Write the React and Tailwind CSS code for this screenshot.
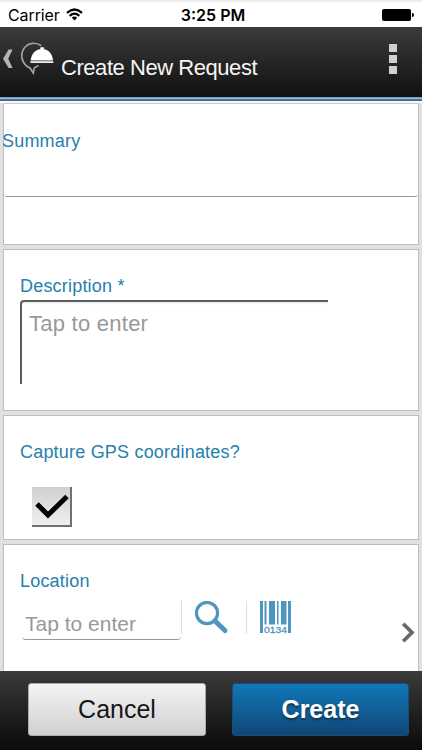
function StatusBar() {
  return (
    <div className="grid h-[27px] shrink-0 grid-cols-3 items-center border-t-2 border-[#ededed] bg-white px-2 font-['Inter',sans-serif] text-black">
      <div className="flex items-center gap-[6px]">
        <span className="text-[16px] leading-[20px] tracking-[-0.1px]">Carrier</span>
        <svg width="17" height="13" viewBox="0 0 17 13" fill="none" stroke="#000" strokeWidth="2.2">
          <path d="M1 4.8Q8.5 -1.8 16 4.8" />
          <path d="M3.7 7.8Q8.5 3.6 13.3 7.8" />
          <path d="M8.5 12.5L5.8 9.8Q8.5 7.4 11.2 9.8Z" fill="#000" stroke="none" />
        </svg>
      </div>
      <span className="pl-1 text-center text-[16px] leading-[20px] font-semibold whitespace-nowrap">3:25 PM</span>
      <div className="flex items-center justify-end gap-px">
        <div className="h-[12px] w-[29px] rounded-[2px] bg-black" />
        <div className="h-1 w-[2px] rounded-r bg-black" />
      </div>
    </div>
  );
}

function Header() {
  return (
    <header className="flex h-[70px] shrink-0 bg-linear-to-b from-[#3c3c3c] to-[#111111] text-white">
      <svg className="shrink-0" width="61" height="70" viewBox="0 0 61 70" fill="none">
        <path d="M8.6 22.5H12.6L8.2 31.8L12.6 41H8.6L3 31.8Z" fill="#b4b4b4" />
        <path d="M41.3 18.7C36 15 28.8 15.5 24.7 20.5C20 26.2 21.3 34 26 38.5C27.5 39.8 29 40.5 30 41L33.3 46L34.4 40.8L38.5 38.5" stroke="#a0a0a0" strokeWidth="1.7" />
        <path d="M30.7 33.4C31.2 26.5 36 22 42 22S52.5 26.5 53 33.4Z" fill="#fff" />
        <rect x="30.4" y="34.2" width="23" height="1.8" fill="#eee" />
        <rect x="40.2" y="20.2" width="4" height="2.4" rx="1" fill="#fff" />
      </svg>
      <h1 className="mt-[28px] grow text-[22px] leading-[25px] tracking-[-0.45px] text-[#f5f5f5]">Create New Request</h1>
      <div className="mt-[17px] mr-[25px] flex flex-col gap-[3px]">
        <i className="size-2 bg-[#d0d0d0]" />
        <i className="size-2 bg-[#d0d0d0]" />
        <i className="size-2 bg-[#d0d0d0]" />
      </div>
    </header>
  );
}

function Card({ className, children }) {
  return <section className={"shrink-0 border border-[#bdbdbd] bg-white " + className}>{children}</section>;
}

function Label({ children }) {
  return <div className="text-[18px] leading-[20px] tracking-[0.2px] text-[#2580ae]">{children}</div>;
}

export default function App() {
  return (
    <div className="flex h-[750px] w-[422px] flex-col overflow-hidden bg-[#e0e0e0] font-['Liberation_Sans',Arial,sans-serif]">
      <StatusBar />
      <Header />
      <div className="h-px shrink-0 bg-[#749cc4]" />
      <div className="h-px shrink-0 bg-[#9dc0df]" />
      <div className="h-[2px] shrink-0 bg-[#5068a0]" />
      <div className="h-[2px] shrink-0 bg-[#f3f5f7]" />
      <main className="flex grow flex-col gap-[4px] overflow-hidden px-[3px]">
        <Card className="h-[142px] border-t-[#c5d3c5]">
          <div className="h-[93px] rounded-b-[3px] border-b border-[#999] pt-[27px]">
            <div className="-ml-[2px]"><Label>Summary</Label></div>
          </div>
        </Card>
        <Card className="h-[162px] pt-[26px] pl-4">
          <Label>Description *</Label>
          <div className="mt-[4px] h-[84px] w-[308px] rounded-tl-[4px] border-t-2 border-l-2 border-[#5c5c5c] bg-linear-to-b from-[#ececec] to-white to-[3px] pt-[9px] pl-[7px] text-[22px] leading-[26px] tracking-[0.25px] text-[#999]">Tap to enter</div>
        </Card>
        <Card className="h-[125px] pt-[26px] pl-4">
          <Label>Capture GPS coordinates?</Label>
          <div className="mt-[25px] ml-[12px] size-[40px] border-r-2 border-b-2 border-[#707070] bg-linear-to-b from-[#cfcfcf] to-[#f0f0f0]">
            <svg width="38" height="38" viewBox="0 0 38 38" fill="none">
              <path d="M5 17L16 28L35 9.5" stroke="#000" strokeWidth="5" />
            </svg>
          </div>
        </Card>
        <Card className="h-[129px] pt-[26px] pl-4">
          <Label>Location</Label>
          <div className="flex items-start pt-[7px]">
            <div className="mt-1 ml-[2px] h-[38px] w-[159px] rounded-b-[4px] border-b border-[#999] pt-[9px] pl-[3px] text-[21px] leading-[26px] text-[#999]">Tap to enter</div>
            <div className="mt-[3px] h-[33px] w-px bg-[#dedede]" />
            <svg className="mt-[3px] ml-[13px]" width="34" height="34" viewBox="0 0 34 34" fill="none" stroke="#4e96c0">
              <circle cx="12" cy="12" r="10.6" strokeWidth="3.2" />
              <path d="M19.8 19.8L30 29.5" strokeWidth="5" strokeLinecap="round" />
            </svg>
            <div className="mt-[3px] ml-[17px] h-[33px] w-px bg-[#dedede]" />
            <svg className="mt-[3px] ml-[13px]" width="31" height="33" viewBox="0 0 31 33" fill="#4e96c0">
              <path d="M0 0H3V32H0ZM4.5 0H6.5V23.5H4.5ZM9 0H15V23.5H9ZM17 0H18.5V23.5H17ZM21 0H26.5V23.5H21ZM28 0H31V32H28Z" />
              <text x="4" y="32" fontSize="9" stroke="#4e96c0" strokeWidth="0.3" textLength="23" lengthAdjust="spacingAndGlyphs">0134</text>
            </svg>
            <svg className="mt-[24px] mr-[3px] ml-auto" width="14" height="21" viewBox="0 0 14 21" fill="none" stroke="#696969" strokeWidth="3.7">
              <path d="M2.2 1.8L11 10.5L2.2 19.2" />
            </svg>
          </div>
        </Card>
      </main>
      <footer className="flex h-[79px] shrink-0 gap-[26px] bg-linear-to-b from-[#3b3b3b] to-[#0b0b0b] pt-[12px] pl-[28px]">
        <button className="h-[53px] w-[178px] rounded-[3px] border border-[#aaa] bg-linear-to-b from-[#f4f4f4] to-[#d0d0d0] pb-[2px] text-[25px] leading-[30px] text-[#171717]">Cancel</button>
        <button className="h-[53px] w-[177px] rounded-[3px] border border-[#174d77] bg-linear-to-b from-[#1178b8] to-[#0f4777] pb-[2px] text-[25px] leading-[30px] font-bold text-white [text-shadow:0_2px_2px_#123552]">Create</button>
      </footer>
    </div>
  );
}
